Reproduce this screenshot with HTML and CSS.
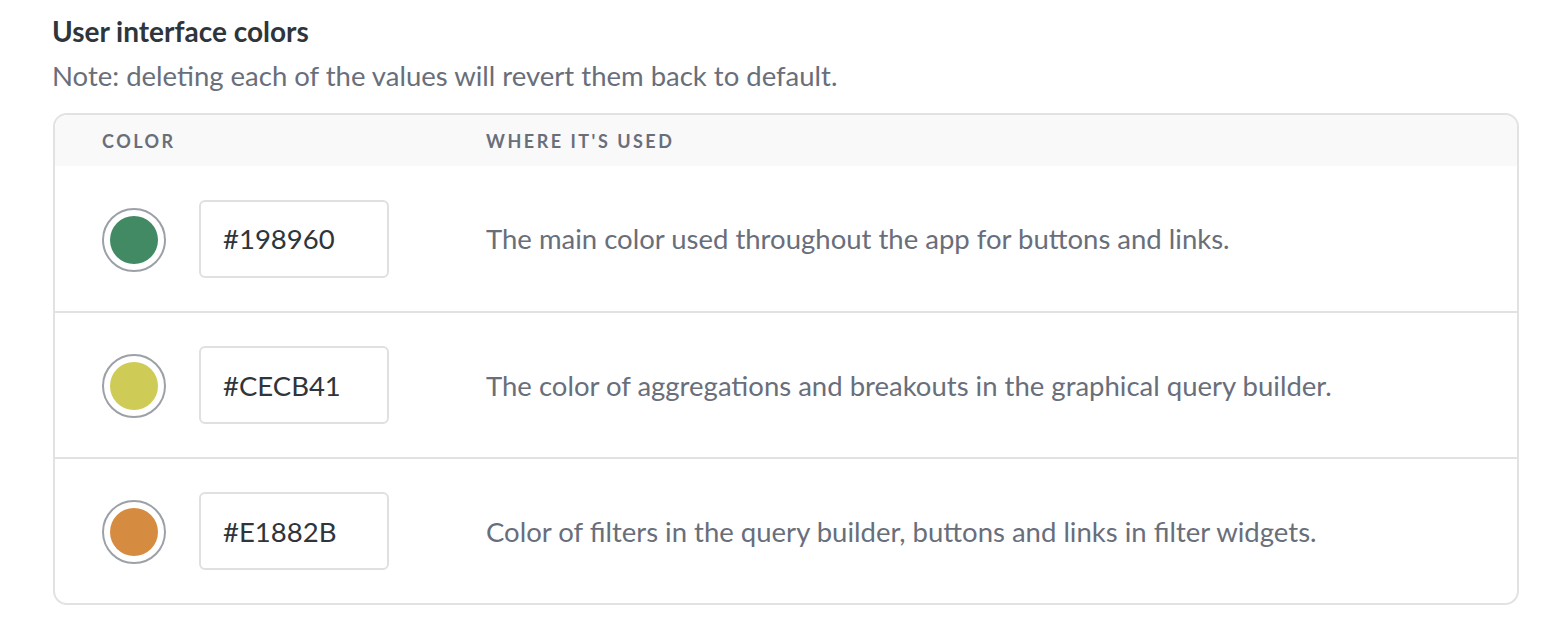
FILE: index.html
```html
<!DOCTYPE html>
<html lang="en">
<head>
<meta charset="UTF-8">
<meta name="viewport" content="width=device-width, initial-scale=1.0">
<title>User interface colors</title>
<link rel="stylesheet" href="styles.css">
</head>
<body>

<div class="settings">
  <h2 class="title">User interface colors</h2>
  <p class="note">Note: deleting each of the values will revert them back to default.</p>

  <div class="color-table">
    <div class="table-head">
      <div class="col-color">Color</div>
      <div class="col-usage">Where it's used</div>
    </div>

    <div class="table-row">
      <div class="col-color">
        <span class="swatch"><span class="swatch-fill green"></span></span>
        <input type="text" class="hex-input" value="#198960">
      </div>
      <div class="col-usage">The main color used throughout the app for buttons and links.</div>
    </div>

    <div class="table-row">
      <div class="col-color">
        <span class="swatch"><span class="swatch-fill yellow"></span></span>
        <input type="text" class="hex-input" value="#CECB41">
      </div>
      <div class="col-usage">The color of aggregations and breakouts in the graphical query builder.</div>
    </div>

    <div class="table-row">
      <div class="col-color">
        <span class="swatch"><span class="swatch-fill orange"></span></span>
        <input type="text" class="hex-input" value="#E1882B">
      </div>
      <div class="col-usage">Color of filters in the query builder, buttons and links in filter widgets.</div>
    </div>
  </div>
</div>

</body>
</html>
```

FILE: styles.css
```css
body {
  margin: 0;
  font-family: Lato, "Noto Sans", sans-serif;
  background-color: #fff;
}
.settings {
  padding: 14px 37px 0 52px;
}
.title {
  margin: 0;
  font-size: 28px;
  font-weight: 700;
  line-height: 34px;
  color: #2e353b;
}
.note {
  margin: 11px 0 20px;
  font-size: 27.5px;
  line-height: 34px;
  color: #696e7b;
}
.color-table {
  margin-left: 1px;
  border: 2px solid #e2e2e2;
  border-radius: 14px;
  overflow: hidden;
}
.table-head {
  display: grid;
  grid-template-columns: 384px 1fr;
  align-items: center;
  height: 51px;
  padding-left: 47px;
  background-color: #f9f9f9;
  font-size: 18px;
  font-weight: 700;
  letter-spacing: 2.5px;
  text-transform: uppercase;
  color: #696e7b;
}
.table-row {
  display: grid;
  grid-template-columns: 384px 1fr;
  align-items: center;
  height: 144px;
  padding-left: 47px;
  border-top: 2px solid #e2e2e2;
}
.table-head + .table-row {
  border-top: none;
  height: 145px;
}
.table-row .col-color {
  display: flex;
  align-items: center;
  gap: 33px;
}
.table-row .col-usage {
  font-size: 27.5px;
  color: #696e7b;
}
.swatch {
  display: flex;
  align-items: center;
  justify-content: center;
  width: 60px;
  height: 60px;
  border: 2px solid #9ca0a7;
  border-radius: 50%;
  margin-top: 2px;
}
.swatch-fill {
  width: 48px;
  height: 48px;
  border-radius: 50%;
}
.green { background-color: #428a63; }
.yellow { background-color: #cfcb57; }
.orange { background-color: #d68c40; }
.hex-input {
  box-sizing: border-box;
  width: 190px;
  height: 78px;
  padding: 0 0 0 22px;
  font-family: Lato, "Noto Sans", sans-serif;
  font-size: 27.5px;
  color: #2e353b;
  border: 2px solid #e0e0e0;
  border-radius: 6px;
  outline: none;
}
```
